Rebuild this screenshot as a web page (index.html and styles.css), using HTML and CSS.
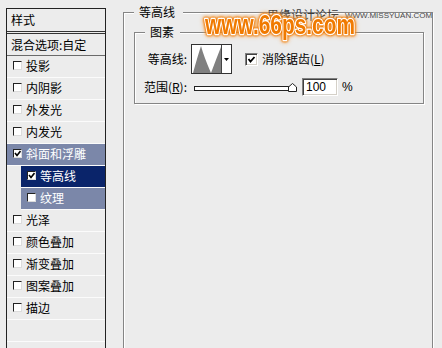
FILE: index.html
```html
<!DOCTYPE html>
<html lang="zh-CN">
<head>
<meta charset="utf-8">
<title>图层样式 - 等高线</title>
<link rel="stylesheet" href="styles.css">
</head>
<body>
<div class="dialog">
  <div class="styles-list">
    <div class="list-head">样式</div>
    <div class="list-blend">混合选项:自定</div>
    <div class="row"><span class="cb"></span>投影</div>
    <div class="row"><span class="cb"></span>内阴影</div>
    <div class="row"><span class="cb"></span>外发光</div>
    <div class="row"><span class="cb"></span>内发光</div>
    <div class="row parent"><span class="cb"><svg viewBox="0 0 7 7"><polyline points="1,3 3,5.5 6.5,1" /></svg></span>斜面和浮雕</div>
    <div class="row sub on"><span class="cb"><svg viewBox="0 0 7 7"><polyline points="1,3 3,5.5 6.5,1" /></svg></span>等高线</div>
    <div class="row sub parent"><span class="cb"></span>纹理</div>
    <div class="row"><span class="cb"></span>光泽</div>
    <div class="row"><span class="cb"></span>颜色叠加</div>
    <div class="row"><span class="cb"></span>渐变叠加</div>
    <div class="row"><span class="cb"></span>图案叠加</div>
    <div class="row"><span class="cb"></span>描边</div>
    <div class="row"></div>
  </div>

  <div class="panel">
    <fieldset class="group outer">
      <legend>等高线</legend>
      <fieldset class="group inner">
        <legend>图素</legend>
        <div class="form">
          <span class="lbl">等高线:</span>
          <div class="line1">
            <div class="picker">
              <svg class="curve" viewBox="0 0 29 28" preserveAspectRatio="none">
                <path d="M1,28 Q6,10 9,1 Q12,12 19,28 Q25,12 29,2 V28 Z" fill="#808080"/>
              </svg>
              <div class="arrow"><svg viewBox="0 0 5 3"><polygon points="0,0 5,0 2.5,3" fill="#000"/></svg></div>
            </div>
            <span class="check"><span class="cb13"><svg viewBox="0 0 9 9"><polyline points="1.5,4 3.5,6.5 7.5,2" /></svg></span>消除锯齿(<u>L</u>)</span>
          </div>
          <span class="lbl">范围(<u>R</u>):</span>
          <div class="line2">
            <div class="slider">
              <div class="track"></div>
              <svg class="thumb" viewBox="0 0 9 9"><polygon points="4.5,0.5 8.5,4 8.5,8.5 0.5,8.5 0.5,4" fill="#fff" stroke="#222" stroke-width="1"/></svg>
            </div>
            <div class="num">100</div>
            <span class="pct">%</span>
          </div>
        </div>
      </fieldset>
    </fieldset>
  </div>

  <div class="watermark">
    <span class="wm-cn">思缘设计论坛</span>
    <span class="wm-url">WWW.MISSYUAN.COM</span>
    <svg class="wm-logo" width="160" height="38" viewBox="0 0 160 38">
      <text x="4" y="30" textLength="150" lengthAdjust="spacingAndGlyphs">www.66ps.com</text>
    </svg>
  </div>
</div>
</body>
</html>
```
FILE: styles.css
```css
* { box-sizing: border-box; }
html, body { margin: 0; padding: 0; }
body {
  width: 442px;
  height: 348px;
  overflow: hidden;
  background: #ececec;
  font-family: "Noto Sans CJK SC", "Liberation Sans", sans-serif;
  font-size: 12px;
  color: #000;
}
.dialog {
  position: relative;
  display: flex;
  align-items: flex-start;
  height: 348px;
}

/* left styles list */
.styles-list {
  flex: none;
  margin: 8px 0 0 6px;
  width: 100px;
  height: 360px;
  border: 1px solid #222;
  border-bottom: none;
}
.list-head {
  height: 25px;
  padding-left: 4px;
  line-height: 22px;
  border-bottom: 3px double #333;
}
.list-blend {
  height: 22px;
  padding-left: 4px;
  line-height: 21px;
  border-bottom: 1px solid #6a6a6a;
}
.row {
  height: 22px;
  display: flex;
  align-items: center;
  padding-left: 6px;
  padding-bottom: 2px;
  line-height: 16px;
  border-bottom: 1px solid #fbfbfb;
  white-space: nowrap;
}
.row.sub { margin-left: 14px; }
.row.parent { background: #7b87a9; color: #fff; }
.row.on { background: #0a246a; color: #fff; }
.cb {
  flex: none;
  width: 9px;
  height: 9px;
  margin-right: 4px;
  background: #fff;
  border-top: 1px solid #222;
  border-left: 1px solid #222;
  border-right: 1px solid #dcdcdc;
  border-bottom: 1px solid #dcdcdc;
  display: flex;
}
.cb svg { width: 7px; height: 7px; display: block; }
.cb polyline { fill: none; stroke: #000; stroke-width: 1.6; }

/* right panel */
.panel {
  flex: 1;
  margin: 0 9px 0 17px;
  padding-top: 5px;
}
.group {
  margin: 0;
  min-width: 0;
  border: 1px solid #858585;
  box-shadow: inset 1px 1px 0 #fff, 1px 1px 0 #fff;
}
.group > legend {
  line-height: 14px;
  background: #ececec;
}
.outer {
  height: 400px;
  padding: 6px 8px 0 10px;
}
.outer > legend { padding: 0 8px 0 5px; }
.inner { padding: 5px 8px 7px 6px; }
.inner > legend { margin-left: 4px; padding: 0 6px 0 5px; }

.form {
  display: grid;
  grid-template-columns: 46px auto;
  column-gap: 4px;
  row-gap: 4px;
  align-items: center;
}
.lbl { text-align: right; white-space: nowrap; line-height: 16px; }
.line1 { display: flex; align-items: center; }
.picker {
  display: flex;
  width: 41px;
  height: 30px;
  border: 1px solid #333;
  background: #fff;
}
.picker .curve { display: block; width: 29px; height: 28px; }
.picker .arrow {
  width: 10px;
  border-left: 1px solid #444;
  display: flex;
  align-items: center;
  justify-content: center;
}
.picker .arrow svg { width: 5px; height: 3px; display: block; }
.check {
  display: flex;
  align-items: center;
  margin-left: 13px;
  white-space: nowrap;
  line-height: 16px;
}
.cb13 {
  width: 13px;
  height: 13px;
  margin-right: 4px;
  background: #fff;
  border: 1px solid;
  border-color: #808080 #fff #fff #808080;
  box-shadow: inset 1px 1px 0 #404040, inset -1px -1px 0 #d4d0c8;
  display: flex;
  align-items: center;
  justify-content: center;
}
.cb13 svg { width: 9px; height: 9px; display: block; }
.cb13 polyline { fill: none; stroke: #000; stroke-width: 1.8; }

.line2 { display: flex; align-items: center; height: 18px; }
.slider {
  position: relative;
  width: 103px;
  height: 18px;
  margin-left: 3px;
  margin-right: 5px;
  display: flex;
  align-items: center;
}
.track {
  width: 96px;
  height: 5px;
  margin-top: 2px;
  background: #fff;
  border: 1px solid #222;
}
.thumb {
  position: absolute;
  right: 0;
  top: 5px;
  width: 9px;
  height: 9px;
}
.num {
  width: 36px;
  height: 18px;
  padding-left: 3px;
  line-height: 16px;
  background: #fff;
  border: 1px solid;
  border-color: #808080 #fff #fff #808080;
  box-shadow: inset 1px 1px 0 #404040, inset -1px -1px 0 #d4d0c8;
  font-family: "Liberation Sans", sans-serif;
}
.pct { margin-left: 4px; font-family: "Liberation Sans", sans-serif; }

/* watermark overlay */
.watermark {
  position: absolute;
  left: 0;
  top: 0;
  width: 442px;
  height: 44px;
  pointer-events: none;
}
.wm-cn {
  position: absolute;
  left: 267px;
  top: 8px;
  font-size: 12px;
  line-height: 14px;
  color: #3a3a3a;
}
.wm-url {
  position: absolute;
  left: 345px;
  top: 11px;
  font-family: "Liberation Sans", sans-serif;
  font-size: 8px;
  line-height: 10px;
  color: #4a4a4a;
}
.wm-logo {
  position: absolute;
  left: 201px;
  top: 4px;
  overflow: visible;
  filter: drop-shadow(0 0 1px #f07800) drop-shadow(0 0 1px #f07800) drop-shadow(0 0 2px rgba(250, 170, 80, 0.8));
}
.wm-logo text {
  font-family: "Liberation Sans", sans-serif;
  font-weight: bold;
  font-size: 27px;
  fill: #f07a00;
  stroke: #fff;
  stroke-width: 2.5px;
  stroke-linejoin: round;
  paint-order: stroke;
}
```
